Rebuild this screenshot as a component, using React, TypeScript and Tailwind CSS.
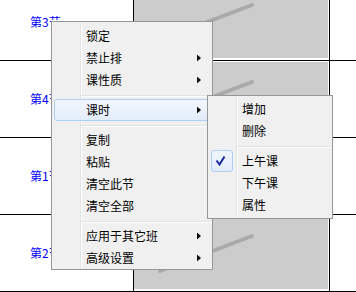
import React from "react";

const rows = ["第3节", "第4节", "第1节", "第2节", ""];

function Arrow({ right }: { right: string }) {
  return (
    <svg
      className={`absolute top-1/2 -translate-y-1/2 ${right}`}
      width="4"
      height="7"
      viewBox="0 0 4 7"
    >
      <polygon points="0,0 4,3.5 0,7" fill="#111" />
    </svg>
  );
}

function Item({ label, arrow }: { label: string; arrow?: boolean }) {
  return (
    <div className="relative h-[22px] mx-[2px] flex items-center pl-[32px]">
      <span>{label}</span>
      {arrow && <Arrow right="right-[9px]" />}
    </div>
  );
}

function Sep() {
  return (
    <div className="h-[8px] pt-[4px] pl-[29px] pr-[1px]">
      <div className="h-[1px] bg-[#e2e3e3]" />
      <div className="h-[1px] bg-white" />
    </div>
  );
}

export default function App() {
  return (
    <div className="relative w-[356px] h-[292px] overflow-hidden bg-white font-['Noto_Sans_CJK_SC',sans-serif] text-[12px] leading-none text-black">
      <div className="mt-[-17px] flex flex-col">
        {rows.map((label, i) => (
          <div key={i} className="flex h-[77px] shrink-0 border-t border-black">
            <div className="w-[133px] flex items-center pl-[30px] text-[#0000ff]">
              {label}
            </div>
            <div className="w-[196px] border-l border-black flex flex-col">
              <div className="relative mt-[1px] mb-[2px] mr-[1px] flex-1 bg-[#cccccc]">
                <svg className="absolute inset-0" width="194" height="73">
                  <line
                    x1="26"
                    y1="55"
                    x2="118"
                    y2="20"
                    stroke="#aaaaaa"
                    strokeWidth="4"
                    strokeLinecap="round"
                  />
                </svg>
              </div>
            </div>
            <div className="flex-1 border-l border-black" />
          </div>
        ))}
      </div>

      {/* main context menu */}
      <div className="absolute left-[51px] top-[21px] w-[162px] h-[249px] border border-[#979797] bg-[#f0f0f0] pt-[3px]">
        <div className="absolute left-[28px] top-0 bottom-0 w-[2px] border-l border-l-[#e2e3e3] border-r border-r-white" />
        <div className="relative">
          <Item label="锁定" />
          <Item label="禁止排" arrow />
          <Item label="课性质" arrow />
          <Sep />
          <div className="relative h-[22px] mx-[2px] flex items-center pl-[31px] border border-[#aecff7] rounded-[3px] bg-linear-to-b from-[#f3f7fd] to-[#e2ecfa]">
            <span>课时</span>
            <Arrow right="right-[8px]" />
          </div>
          <Sep />
          <Item label="复制" />
          <Item label="粘贴" />
          <Item label="清空此节" />
          <Item label="清空全部" />
          <Sep />
          <Item label="应用于其它班" arrow />
          <Item label="高级设置" arrow />
        </div>
      </div>

      {/* submenu */}
      <div className="absolute left-[207px] top-[95px] w-[126px] h-[124px] border border-[#979797] bg-[#f0f0f0] pt-[2px]">
        <div className="absolute left-[28px] top-0 bottom-0 w-[2px] border-l border-l-[#e2e3e3] border-r border-r-white" />
        <div className="relative">
          <Item label="增加" />
          <Item label="删除" />
          <Sep />
          <div className="relative h-[22px] mx-[2px] flex items-center pl-[32px]">
            <div className="absolute left-[1px] top-0 w-[22px] h-[22px] rounded-[3px] border border-[#aecff7] bg-linear-to-b from-[#f0f6fe] to-[#e2ecfa] flex items-center justify-center">
              <svg width="20" height="20" viewBox="0 0 20 20">
                <polyline
                  points="4.5,9.5 7.5,13.5 12.5,5.5"
                  fill="none"
                  stroke="#1c2a9c"
                  strokeWidth="2"
                />
              </svg>
            </div>
            <span>上午课</span>
          </div>
          <Item label="下午课" />
          <Item label="属性" />
        </div>
      </div>
    </div>
  );
}
